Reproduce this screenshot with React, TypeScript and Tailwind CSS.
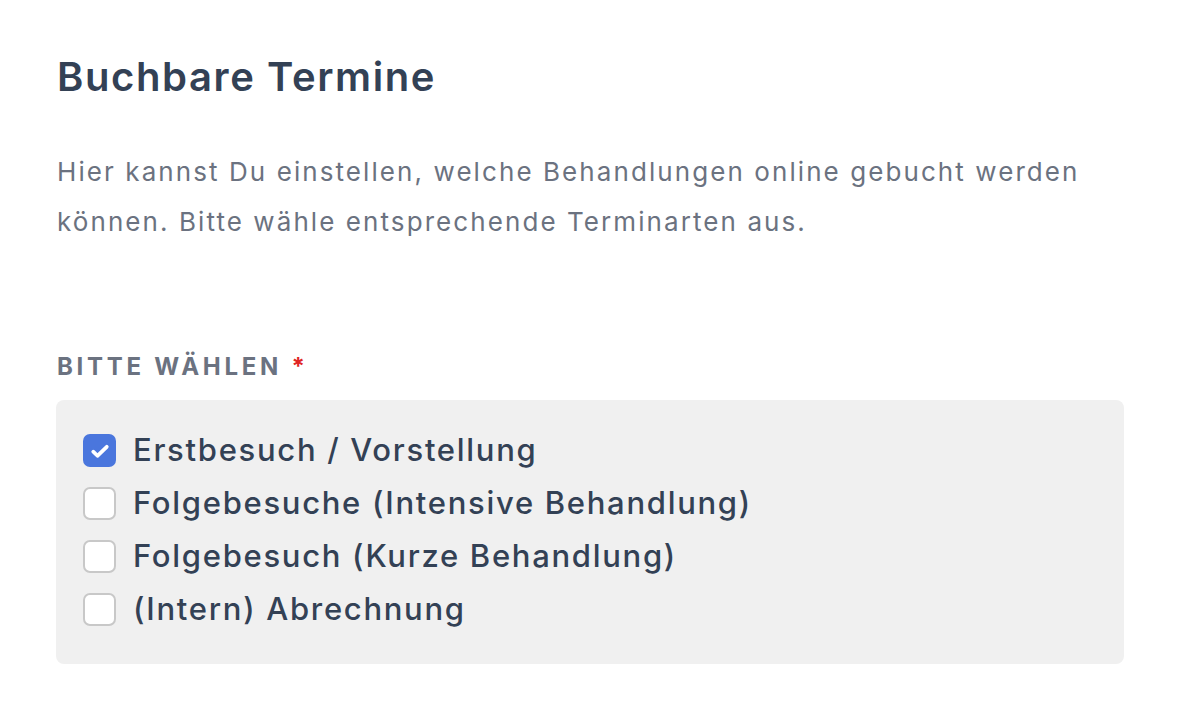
import React from "react";

const items = [
  { label: "Erstbesuch / Vorstellung", checked: true },
  { label: "Folgebesuche (Intensive Behandlung)", checked: false },
  { label: "Folgebesuch (Kurze Behandlung)", checked: false },
  { label: "(Intern) Abrechnung", checked: false },
];

function Box({ checked }: { checked: boolean }) {
  if (checked) {
    return (
      <span className="flex h-[33px] w-[33px] shrink-0 items-center justify-center rounded-[7px] bg-[#4a76dd]">
        <svg width="28" height="28" viewBox="0 0 24 24" fill="none">
          <path d="M6.2 12.6l3.6 3.5L17.8 8.4" stroke="white" strokeWidth="3.2" strokeLinecap="round" strokeLinejoin="round" />
        </svg>
      </span>
    );
  }
  return <span className="block h-[33px] w-[33px] shrink-0 rounded-[7px] border-2 border-[#c8c8c8] bg-white" />;
}

export default function App() {
  return (
    <div className="min-h-[724px] bg-white px-[56px] pt-[53px] font-['Inter','Liberation_Sans',sans-serif]">
      <h1 className="pl-[1px] text-[40px] font-semibold leading-[48px] tracking-[0.04em] text-[#334155]">Buchbare Termine</h1>
      <p className="mt-[46px] pl-[1px] text-[26px] leading-[50px] tracking-[0.08em] text-[#6b7280]">
        Hier kannst Du einstellen, welche Behandlungen online gebucht werden
        <br />
        können. Bitte wähle entsprechende Terminarten aus.
      </p>
      <div className="mt-[105px] pl-[1px] text-[24px] font-bold uppercase leading-[30px] tracking-[0.155em] text-[#6b7280]">
        Bitte wählen <span className="text-[#e02424]">*</span>
      </div>
      <div className="mt-[18px] w-[1068px] rounded-[8px] bg-[#f0f0f0] px-[27px] pb-[28px] pt-[24px]">
        {items.map((it) => (
          <label key={it.label} className="flex h-[53px] items-center gap-[17px]">
            <Box checked={it.checked} />
            <span className="text-[31px] font-medium tracking-[0.055em] text-[#334155]">{it.label}</span>
          </label>
        ))}
      </div>
    </div>
  );
}
